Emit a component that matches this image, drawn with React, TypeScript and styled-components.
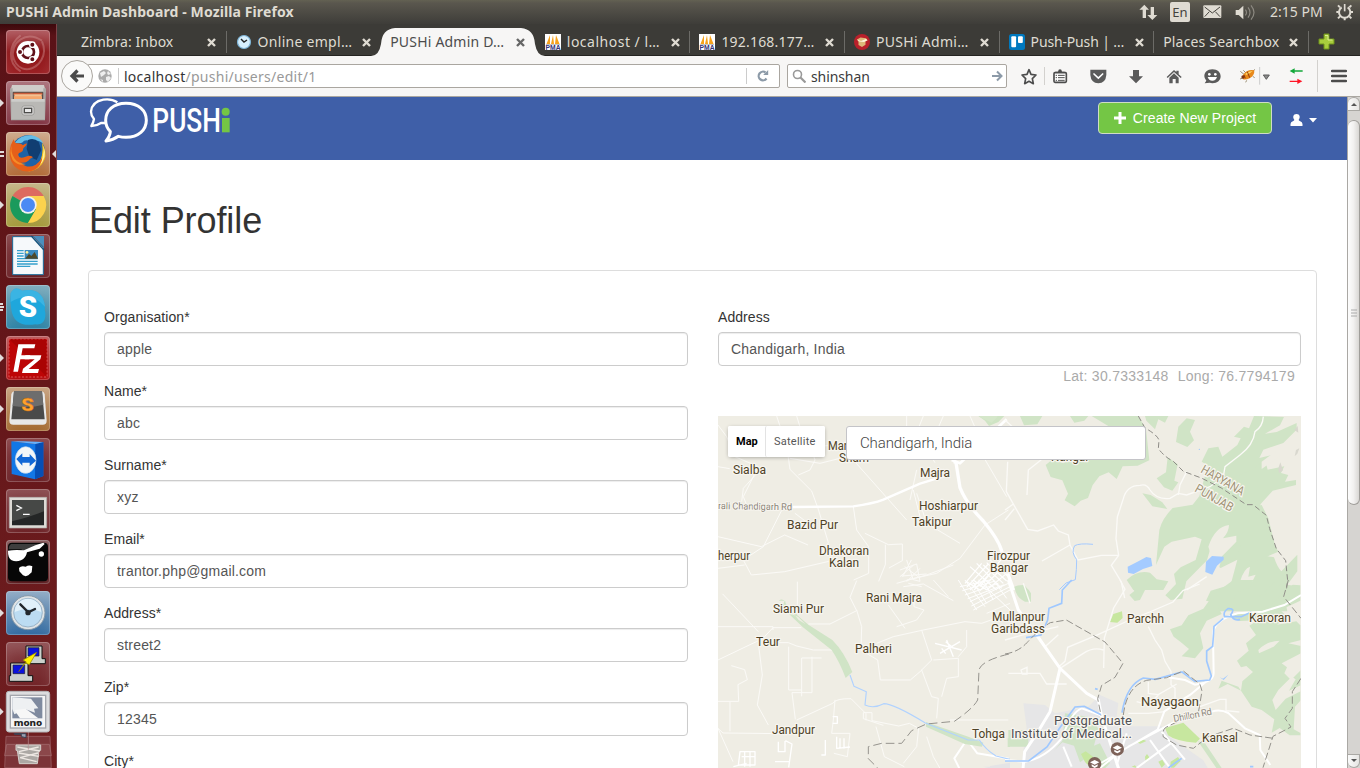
import React from 'react';
import styled, { createGlobalStyle } from 'styled-components';

const Global = createGlobalStyle`
  * { box-sizing: border-box; }
  html, body { margin: 0; height: 768px; overflow: hidden; background: #fff; }
  body { font-family: "Liberation Sans", Arial, sans-serif; font-size: 14px; }
  svg { display: block; flex: none; }
`;

const chrome = '"Noto Sans", "Open Sans", sans-serif';

/* ---------- shared drawing helper: a viewBox in thirds of a pixel ---------- */
const Drawing = ({ x, y, w, h, children }: { x: number; y: number; w: number; h: number; children: React.ReactNode }) => (
  <svg width={w / 3} height={h / 3} viewBox={`${x} ${y} ${w} ${h}`}>{children}</svg>
);

/* ---------- desktop frame ---------- */
const Desktop = styled.div`
  width: 1360px; height: 768px; display: flex; flex-direction: column; overflow: hidden;
`;
const TopPanel = styled.header`
  height: 24px; flex: none; display: flex; align-items: center; justify-content: space-between;
  background: linear-gradient(#636152, #5a574e 12%, #3e3d39); padding: 0 6px; color: #dfdbd2;
  font-family: ${chrome};
`;
const WindowTitle = styled.div`font-size: 14px; font-weight: 700; letter-spacing: 0.11px; line-height: 24px; white-space: nowrap;`;
const Indicators = styled.div`display: flex; align-items: center; height: 24px;`;
const Clock = styled.span`font-size: 14px; letter-spacing: 0; margin: 0 12px 0 15px; width: 54px; line-height: 22px; white-space: nowrap;`;
const Keyboard = styled.span`
  width: 20px; height: 20px; border-radius: 2px; background: #dfdbd2; color: #45433d; font-size: 13px;
  line-height: 21px; text-align: center; margin: 0 13px 0 12px;
`;
const Spacer = styled.span`width: 13px;`;
const Work = styled.div`flex: 1; display: flex; min-height: 0;`;

/* ---------- launcher ---------- */
const Launcher = styled.nav`
  width: 57px; flex: none; display: flex; flex-direction: column; padding-top: 6px; overflow: hidden;
  background: linear-gradient(#3c090c, #5a1217 12px, #631619 40%, #701e20);
  border-right: 1px solid #7b4348;
`;
const LaunchRow = styled.div<{ $up?: boolean }>`
  display: flex; align-items: center; flex: none; height: 44px;
  margin-bottom: ${p => (p.$up ? 4 : 7)}px;
`;
const Mark = styled.div`width: 6px; flex: none; display: flex;`;
const Tile = styled.div<{ $bg: string }>`
  width: 44px; height: 44px; border-radius: 4px; background: ${p => p.$bg}; overflow: hidden;
  box-shadow: inset 0 0 0 1px rgba(255,255,255,.22), inset 0 9px 14px rgba(255,255,255,.13);
`;
const Running = ({ n }: { n?: number }) => (
  <Mark>
    {n === 1 && <svg width="4" height="8"><path d="M0 0 4 4 0 8z" fill="#e2dcdc" /></svg>}
    {n === 2 && <svg width="4" height="8"><path d="M0 1h4v2H0zM0 5h4v2H0z" fill="#e2dcdc" /></svg>}
    {n === 3 && <svg width="4" height="10"><path d="M0 1h3v2H0zM0 4h4v2H0zM0 7h3v2H0z" fill="#e2dcdc" /></svg>}
  </Mark>
);

const apps: { y: number; bg: string; n?: number; focus?: boolean; up?: boolean; art: React.ReactNode }[] = [
  {
    y: 18, bg: 'linear-gradient(#a84a50, #8d1417 50%, #9c2024)', art: <>
      <path d="M40 108C30 50 80 20 126 50M62 142C20 118 26 60 62 34M112 122C82 148 46 136 38 92M126 52c18 40-8 80-42 84" fill="none" stroke="#d69a9c" strokeWidth="6" opacity=".4" />
      <circle cx="84" cy="85" r="34" fill="#fff" />
      <circle cx="84" cy="84" r="18" fill="none" stroke="#601018" strokeWidth="8" />
      <g stroke="#fff" strokeWidth="4"><circle cx="60" cy="84" r="8" fill="#601018" /><circle cx="97" cy="62" r="8" fill="#601018" /><circle cx="97" cy="106" r="8" fill="#601018" /></g>
    </>,
  },
  {
    y: 171, bg: 'linear-gradient(#a3656f, #813442)', n: 1, art: <>
      <path d="M36 183h96l6 22H30z" fill="#cfcdca" /><path d="M38 203h92v26H38z" fill="#56504b" />
      <path d="M41 206h86v7H41z" fill="#c95d3b" /><path d="M43 211h82v14H43z" fill="#f3c192" /><path d="M42 217h84v10H42z" fill="#f4a76d" />
      <path d="M30 193h8v32h92v-32h8l-3 96H33z" fill="#a9a8a5" /><path d="M34 225h100v61H34z" fill="#b9b8b5" /><path d="M34 225h100v8H34z" fill="#cdccca" />
      <rect x="66" y="246" width="36" height="27" rx="6" fill="#dedddb" stroke="#8a8987" strokeWidth="2" /><rect x="73" y="253" width="22" height="13" fill="#e8e8e8" stroke="#4d4d4b" strokeWidth="4" />
    </>,
  },
  {
    y: 324, bg: 'linear-gradient(#c9a180, #b26b38)', n: 2, focus: true, art: <>
      <circle cx="84" cy="386" r="52" fill="#1f62a5" />
      <path d="M44 356q20-24 50-22 26 4 36 24-22-14-40-6-14-8-24 4-10 2-22 0z" fill="#64bde6" />
      <path d="M84 348q18-8 32 6l8 24-14 30-22-10-8-24z" fill="#113e72" />
      <path d="M126 356q16 28 8 50-14 34-50 37 38-18 42-50 3-20 0-37z" fill="#f8c21c" /><path d="M131 366q12 36-14 60 16-30 14-60z" fill="#fff19a" />
      <path d="M41 346q2 10 8 12 14-2 20 6 6-6 12-5-4 9-11 14 0 9-7 12-9 2-8 9 2 12 22 4 16-6 22 2-10 4-14 10-8 8-22 6 20 20 44 6 14-8 20-22-2 26-24 38-24 10-48-2-30-20-26-56 2-18 12-34z" fill="#e65f19" />
      <path d="M36 364q-6 20 8 40 10 14 34 16-24 8-40-12-12-22-2-44z" fill="#f58c28" />
    </>,
  },
  {
    y: 477, bg: 'linear-gradient(#bfae7c, #a59a3b)', n: 1, art: <>
      <path d="M84 543 37.500 516A54 54 0 0 1 131 516z" fill="#dd6a60" /><path d="M84 543 37.500 516A54 54 0 0 0 84 597l24-41z" fill="#1a9a5c" />
      <path d="M84 516h47A54 54 0 0 1 84 597l24-41z" fill="#fcd24d" />
      <circle cx="84" cy="543" r="26" fill="#f1f1f1" /><circle cx="84" cy="543" r="21" fill="#4a8af4" />
    </>,
  },
  {
    y: 630, bg: 'linear-gradient(#7b3439, #6b2126)', art: <>
      <path d="M38 638h62l30 32v82H38z" fill="#f6f9fb" stroke="#186c9c" strokeWidth="3" /><path d="M100 636h32v34z" fill="#4b8fbd" /><path d="m94 636 38 42" stroke="#14517a" strokeWidth="4" />
      <path d="M51 680h20M51 688h20M51 696h20M51 704h62M51 712h62M51 720h62M51 727h40" stroke="#35a0cc" strokeWidth="4" />
      <path d="M74 678h40v27H74z" fill="#3b8bc0" /><path d="m75 704 12-14 7 6 10-12 10 20z" fill="#4c4a2c" /><circle cx="81" cy="685" r="4" fill="#fff29a" />
    </>,
  },
  {
    y: 15, bg: 'linear-gradient(#72a4b6, #2d83a5)', n: 3, art: <>
      <path d="M32 40q12-24 34-8 62-12 69 48-2 8 1 18 2 38-30 35-64 10-72-44-6-24-2-49z" fill="#1fa7dc" /><path d="M32 40q12-24 34-8 62-12 69 48Q92 30 32 66z" fill="#4cbde8" opacity=".6" />
      <text x="84" y="111" textAnchor="middle" fontFamily="Roboto, sans-serif" fontWeight="900" fontSize="88" fill="#fff">S</text>
    </>,
  },
  {
    y: 168, bg: 'linear-gradient(#b44a4c, #b20a0d)', n: 1, art: <>
      <rect x="27" y="177" width="114" height="114" fill="#bd0506" stroke="#dd5555" strokeWidth="3" strokeDasharray="6 5" /><path d="M28 178h112v112z" fill="#8f0000" opacity=".4" />
      <path d="M55 193h51l-3 12H68l-4 21h27l-3 12H61l-7 37H40z" fill="#fff" /><path d="M76 226h48l-3 12-35 29h31l-3 12H66l3-13 35-28H74z" fill="#fff" />
    </>,
  },
  {
    y: 321, bg: 'linear-gradient(#c29a75, #a46a30)', n: 1, art: <>
      <path d="M34 342q2-8 10-8h80q8 0 10 8l6 80q0 12-12 12H40q-12 0-12-12z" fill="#e8e8e8" /><path d="M42 334h84l8 84H34z" fill="#4a4a4a" /><path d="M42 334h84l4 40q-40 12-92 4z" fill="#6d6d6d" />
      <text x="83" y="393" textAnchor="middle" fontFamily="Roboto, sans-serif" fontWeight="900" fontSize="54" fill="#ffa12c" stroke="#bd6414" strokeWidth="1" transform="translate(-10 0) scale(1.12 1)">S</text>
    </>,
  },
  {
    y: 474, bg: 'linear-gradient(#7f3439, #6b2126)', art: <>
      <path d="m34 484 72 8 24-6v102l-25 10-70-16z" fill="#1277e6" /><path d="m106 492 24-6v102l-25 10z" fill="#064fb5" /><path d="m34 484 72 8 24-6-60-2z" fill="#64b3ff" />
      <ellipse cx="77" cy="540" rx="31" ry="40" fill="#f3f6f8" stroke="#c2d7ea" strokeWidth="2" /><path d="m49 537 18-17v11h22v-9l19 20-19 17v-11H67v9z" fill="#1268d6" />
    </>,
  },
  {
    y: 627, bg: 'linear-gradient(#7f3a3e, #6e2327)', art: <>
      <path d="M28 652h112v92H28z" fill="#dddbd6" stroke="#b0aeaa" strokeWidth="2" /><path d="M36 660h96v76H36z" fill="#242626" /><path d="M36 660h96v34q-50 20-96 30z" fill="#464846" />
      <path d="m49 676 15 8-15 8M69 703h20" fill="none" stroke="#fff" strokeWidth="4" />
    </>,
  },
  {
    y: 30, bg: 'linear-gradient(#7b4a4c, #5b1b1e)', art: <>
      <rect x="24" y="38" width="120" height="116" rx="12" fill="#070707" /><path d="M34 42h94L72 66l-8-8H26q0-12 8-16z" fill="#3e3e3e" />
      <path d="M24 62q20-4 48-1l34-15 24-8 4 4-15 14-38 11q-3 17-18 24-15 6-28 0-12-8-11-29z" fill="#fff" /><circle cx="124" cy="72" r="8" fill="#fff" /><path d="M57 114q6-8 20-4 10-6 20-1l-2 18-10 9q-8 5-16 0l-11-12z" fill="#fff" />
    </>,
  },
  {
    y: 183, bg: 'linear-gradient(#86a3bf, #336ba1)', n: 1, art: <>
      <circle cx="84" cy="248" r="51" fill="#dfe3e5" stroke="#8598a7" strokeWidth="3" /><circle cx="84" cy="248" r="43" fill="#bcdcf2" stroke="#9ab4c8" strokeWidth="3" /><path d="M44 246a40 40 0 0 1 80 0q-40-18-80 0z" fill="#e1f1fa" />
      <path d="m61 223 24 24 20-10" fill="none" stroke="#22272c" strokeWidth="7" strokeLinecap="round" /><circle cx="84" cy="248" r="8" fill="#22272c" />
    </>,
  },
  {
    y: 336, bg: 'linear-gradient(#864044, #722428)', up: true, art: <>
      <path d="M78 348h48v38h10v15H87V386h-9z" fill="#ccd2cd" stroke="#111" strokeWidth="3" /><path d="M84 353h33v25H84z" fill="#0b13dc" stroke="#222" strokeWidth="2" />
      <path d="M32 399h52v38h14v17H28v-17h4z" fill="#ccd2cd" stroke="#111" strokeWidth="3" /><path d="M39 405h35v26H39z" fill="#0b13dc" stroke="#222" strokeWidth="2" /><path d="M56 425 75 398l13 6 22-37-41 23 10 6z" fill="#fff000" stroke="#8c8000" strokeWidth="2" />
    </>,
  },
];

const MonoStack = () => (
  <Drawing x={0} y={481} w={168} h={234}>
    <path d="M18 620h132l4 94H14z" fill="#7c3438" stroke="#a1686b" strokeWidth="2" /><path d="m20 644 128 0 6 34H14z" fill="#8b474a" stroke="#a87375" strokeWidth="2" />
    <path d="M42 612h36v12l-14-3v-7H44z" fill="#9aa0b2" stroke="#394052" strokeWidth="3" /><path d="M48 646h74v16h-5l-5 40H58l-6-40h-4z" fill="#aca8a4" stroke="#d5d1cd" strokeWidth="3" />
    <path d="m52 652 68 12M56 670l60 10M60 684l50 12M116 652l-60 14M114 670l-54 14" stroke="#eee8e3" strokeWidth="4" /><path d="M85 604v56" stroke="#b88d8f" strokeWidth="2" />
    <rect x="19" y="485" width="130" height="122" rx="8" fill="#dcdcde" stroke="#b5b5b8" strokeWidth="3" /><rect x="31" y="497" width="106" height="98" fill="#f5f5f6" stroke="#a4a6ac" strokeWidth="4" />
    <path d="M37 503h90v63H37z" fill="#7f8a9f" /><path d="m37 503 56 4 22 29-13 1 3 12-28-10-34 15-6-16z" fill="#eef0f2" /><path d="m43 541 34-4 38 29H60z" fill="#f7f7f7" />
    <text x="84" y="590" textAnchor="middle" fontFamily='"Noto Sans", sans-serif' fontWeight="800" fontSize="28" textLength="86" lengthAdjust="spacingAndGlyphs" fill="#222">mono</text>
    <path d="m0 535 11 11-11 11z" fill="#e2dcdc" />
  </Drawing>
);

/* ---------- browser chrome ---------- */
const Browser = styled.main`flex: 1; min-width: 0; display: flex; flex-direction: column;`;
const TabStrip = styled.div`
  height: 32px; flex: none; display: flex; background: #3c3b37; padding-left: 15px; border-bottom: 1px solid #252421;
  font-family: ${chrome};
`;
const Tab = styled.div<{ $active?: boolean; $line?: boolean }>`
  width: 154.600px; height: 32px; flex: none; display: flex; align-items: center; gap: 6px; padding: 4px 10.500px 0 9px; position: relative;
  color: ${p => (p.$active ? '#4c4c4c' : '#dfdbd2')};
  &::after {
    content: ""; position: absolute; right: 0; top: 7px; width: 1px; height: 22px;
    background: ${p => (p.$line ? '#6c6b67' : 'transparent')};
  }
`;
const TabShape = styled.svg`position: absolute; left: -10px; top: 4px;`;
const TabLabel = styled.span<{ $ls: number }>`
  flex: 1; position: relative; font-size: 14px; line-height: 20px; letter-spacing: ${p => p.$ls}px; white-space: nowrap;
`;
const TabClose = styled.span`position: relative; width: 9px; display: flex; flex: none;`;
const NewTab = styled.div`width: 36px; display: flex; align-items: center; justify-content: center; padding-top: 4px;`;
const NavBar = styled.div`
  height: 41px; flex: none; display: flex; align-items: center; background: #f7f6f5; border-bottom: 1px solid #aaa7a1;
  padding-left: 4px; font-family: ${chrome};
`;
const Back = styled.div`
  width: 32px; height: 32px; flex: none; border-radius: 50%; border: 1px solid #aaa6a0; background: #fafaf9; z-index: 1;
  display: flex; align-items: center; justify-content: center;
`;
const UrlBar = styled.div`
  width: 692px; height: 24px; margin-left: -5px; flex: none; display: flex; align-items: center; background: #fff;
  border: 1px solid #aaa6a0; border-radius: 0 2px 2px 0; padding-left: 9px;
`;
const UrlText = styled.span`
  flex: 1; border-left: 1px solid #ccc; margin-left: 6px; padding-left: 5px; height: 16px; line-height: 17px; font-size: 14px;
  letter-spacing: 0.26px; color: #999; b { color: #333; font-weight: 400; }
`;
const Reload = styled.div`border-left: 1px solid #ccc; height: 16px; width: 33px; display: flex; align-items: center; justify-content: center;`;
const SearchBox = styled.div`
  width: 220px; height: 24px; margin: 0 7px; flex: none; display: flex; align-items: center; background: #fff;
  border: 1px solid #aaa6a0; border-radius: 2px; padding: 0 3px 0 4px; font-size: 14px; color: #3b3b3b; span { flex: 1; margin-left: 5px; letter-spacing: -.1px; line-height: 20px; padding-top: 1px; }
`;
const Cell = styled.div<{ $w: number }>`width: ${p => p.$w}px; flex: none; display: flex; justify-content: center;`;
const Rule = styled.div<{ $h: number }>`width: 1px; height: ${p => p.$h}px; background: #d3d1ce; flex: none;`;

const Favicon = ({ kind }: { kind: string }) => {
  if (kind === 'clock') return <svg width="16" height="16"><circle cx="8" cy="8" r="6.500" fill="#d7effc" stroke="#7eb5d8" strokeWidth="1.200" /><path d="m5 5 3 3 3-2" fill="none" stroke="#222" strokeWidth="1.400" /></svg>;
  if (kind === 'pma') return (
    <svg width="16" height="16"><path d="M0 0h16v16H0z" fill="#fff" /><path d="M5 1 5 10H1.500zM8 1l1 9H6zM11 1l3.500 9H10z" fill="#f7a21b" /><path d="M1 10.500h14" stroke="#aaa" strokeWidth=".7" />
      <text x=".6" y="15.600" fontSize="6.500" fontWeight="700" fontFamily="Liberation Sans, sans-serif" textLength="15" lengthAdjust="spacingAndGlyphs" fill="#333377">PMA</text></svg>
  );
  if (kind === 'red') return <svg width="16" height="16"><circle cx="8" cy="8" r="8" fill="#b9202b" /><path d="m3 5.500 3.500-2 5.500.700 1.500 2-2 1v3.500L8 13 4.500 11V7.500z" fill="#ddb878" /><path d="m3 5.500 4 1.500 5-2 1.500 1.200L10 8l-5-.5z" fill="#fff4da" /></svg>;
  return <svg width="16" height="16"><rect width="16" height="16" rx="2.500" fill="#0079bf" /><rect x="2.300" y="2.300" width="4.800" height="11" rx="1" fill="#fff" /><rect x="9" y="2.300" width="4.800" height="6.800" rx="1" fill="#fff" /></svg>;
};
const tabs = [
  { t: 'Zimbra: Inbox', ls: 0.05 },
  { t: 'Online empl…', icon: 'clock', ls: 0.28 },
  { t: 'PUSHi Admin D…', active: true, ls: 0.2 },
  { t: 'localhost / l…', icon: 'pma', ls: 0.5 },
  { t: '192.168.177…', icon: 'pma', ls: 0.2 },
  { t: 'PUSHi Admi…', icon: 'red', ls: 0.3 },
  { t: 'Push-Push | …', icon: 'trello', ls: -0.15 },
  { t: 'Places Searchbox', ls: 0.18 },
];

/* ---------- page ---------- */
const Viewport = styled.div`flex: 1; min-height: 0; display: flex;`;
const Page = styled.div`flex: 1; min-width: 0; overflow: hidden; background: #fff;`;
const Banner = styled.div`
  height: 63px; background: #3f5fa8; display: flex; justify-content: space-between; align-items: flex-start; padding: 0 29px 0 31px;
`;
const Actions = styled.div`display: flex; align-items: center; height: 42px;`;
const CreateButton = styled.button`
  width: 174px; height: 32px; border: 1px solid #cfdcc5; border-radius: 4px; background: #74c645; color: #fff; margin-right: 18px;
  font: 14px/20px "Liberation Sans", sans-serif; letter-spacing: .12px; display: flex; align-items: center; justify-content: center; gap: 7px; padding: 0; white-space: nowrap;
`;
const UserMenu = styled.div`padding-top: 4px;`;
const Body = styled.section`padding: 39px 30px 0 31px;`;
const Heading = styled.h1`
  margin: 0 0 28px; padding: 1px 0 0 1px; font-size: 36px; line-height: 42px; font-weight: 400; color: #333; letter-spacing: -0.08px;
`;
const Panel = styled.div`
  border: 1px solid #ddd; border-radius: 4px; padding: 36px 15px 0; display: grid; grid-template-columns: 584px 583px; column-gap: 30px; height: 600px;
`;
const Field = styled.label`display: block; margin-bottom: 15px; color: #333; line-height: 20px; letter-spacing: .07px;`;
const Input = styled.input`
  display: block; width: 100%; height: 34px; margin-top: 5px; border: 1px solid #ccc; border-radius: 4px; padding: 6px 12px;
  box-shadow: inset 0 1px 1px rgba(0,0,0,.075); color: #555; font: 14px/20px "Liberation Sans", sans-serif; letter-spacing: .2px; background: #fff;
`;
const Coordinates = styled.div`
  margin: -15px 6px 30px 0; text-align: right; line-height: 20px; letter-spacing: .28px; color: #aaa; span + span { margin-left: 9px; }
`;
const MapFrame = styled.div`position: relative; height: 360px; overflow: hidden; background: #efede4;`;
const MapControls = styled.div`position: absolute; left: 10px; top: 10px; display: flex; box-shadow: 0 1px 4px -1px rgba(0,0,0,.4); border-radius: 2px; background: #fff;`;
const MapType = styled.button<{ $on?: boolean }>`
  height: 31px; border: 0; border-left: ${p => (p.$on ? '0' : '1px solid #e3e3e3')}; background: #fff; padding: 0 7px 0 8px; border-radius: 2px; text-align: left;
  font: ${p => (p.$on ? 700 : 400)} 11px Roboto, sans-serif; letter-spacing: ${p => (p.$on ? 0 : 0.25)}px; color: ${p => (p.$on ? '#000' : '#565656')}; width: ${p => (p.$on ? 37 : 60)}px; white-space: nowrap;
`;
const MapSearch = styled.input`
  position: absolute; left: 128px; top: 10px; width: 300px; height: 34px; border: 1px solid #c4c4c8; border-radius: 3px;
  padding: 0 13px; font: 300 15px Roboto, sans-serif; letter-spacing: -.12px; color: #444; background: #fff;
`;

const Label = ({ x, y, children, s = 12, w }: { x: number; y: number; children: string; s?: number; w?: number }) => (
  <text x={x} y={y} fontSize={s} textLength={w} lengthAdjust="spacingAndGlyphs" fill="#4e4226" stroke="#f7f5ef" strokeWidth="2.500" paintOrder="stroke" strokeLinejoin="round">{children}</text>
);

const Terrain = () => (
  <svg width="583" height="360" viewBox="718 416 583 360" fontFamily="Roboto, sans-serif">
    {/* north-west */}
    <g transform="translate(710 400) scale(.33333)" fill="none" stroke="#fbfaf7" strokeWidth="3" strokeLinejoin="round">
      <path d="M24 75 50 110 75 170 145 200 100 290 112 320M200 48l30 90 10 70 65 65 20 55 30 100-20 30M24 200l35 6M170 205l-25 10-45 50-5 40M260 48l20 65 60 25 95-10M240 175l90 15 60-15M295 120l20 60-15 30-35 15M430 180l160 180M590 48v50l32 40M610 270l20 80 50 40M700 48l-26 60 10 55M780 48l22 50-30 70M820 170l70 120" />
      <path d="M218 325 160 440 100 480M24 410l130 30 70-35 70 30M100 480l24 45 100-10 150-35M24 505l80-10M255 340l40 30M430 320l10 70 36 50v80l-45 20M465 400l70 34 42-2v50l-40 22M526 434v60l-20 50M600 300l20-90M620 280l30 90 100 60M895 330l-70 45-75 100-70 45-90 20M560 550l90-25 80-30M640 48l-20 50 55 90" />
      <path d="m570 510 50-18 10 52-20-5M590 480l20 60M610 496l-40 34M575 528l75-6M604 480l-26 50M584 500l40 30M590 545l40-40" />
      <path d="M248 321 430 319q60-8 90-20l110-48 90-28" stroke="#fff" strokeWidth="7" /><path d="m738 188 12 75q20 50 70 100 45 55 54 87l6 22" stroke="#fff" strokeWidth="10" /><path d="m725 180 25 10 140-132M735 190l-5-15" stroke="#fff" strokeWidth="8" />
      <g strokeWidth="3.500" stroke="#fff"><path d="m780 500 80 70M800 490l75 75M820 495l60 55M840 480l60 55M850 500l-70 70M870 510l-60 62M890 520l-60 50M815 490l-50 60M880 470l-70 90M770 545l40 25M790 540l40 30M830 488l60 55M835 492l-65 70M862 498l-70 72" /></g>
      <path d="M805 48l20 14 12 16 28-12 18-18z" fill="#cfe4c4" stroke="none" /><path d="M808 50q30-14 55 0l-18 18z" fill="#d5e7ca" stroke="none" />
    </g>
    {/* north-east */}
    <g transform="translate(1005 400) scale(.33333)">
      <g fill="#d0e4c6">
        <path d="M45 48h67l-15 25-40 3zM195 48h55l-12 14-30 6zM260 48h140l23 38 10 95-35 16-45 2-18 38-24-20-28 12-20 26-14 39-22 8-18 17-30-18 10-20-17-40-35-10-15-36 18-15 35 10 20-12 30-12 50-10 38-22h90z" />
        <path d="M520 80l25-25 25 5-15 35 12 26-20 20-34-15zM420 48h70l-10 20-20-10-10 30-26-26zM455 235l28-18 5-45 30 20-10 50 12 5-18 25-25-10zM412 280l25 5 35 22 15 20-45-8zM590 185l20-40 30-5 12 30 45-35 10-20-20-5 30-30 15 5 15-37 90 3-12 25-45 25 35-5 60-27v20l-40 40-60 20-12 25 50-12-42 45-16 24-28 6-10 30-18-16z" />
        <path d="M463 390q8-34 40-66l60-10 20-25 22-80 25-30 40 60 70-30 40-30 8 30 50-10-10 20 22 6-10 20 33-5v15l-70 17-36 40-20 60-40 5 50 35-30 45 80 15q10 30 22 42l48-50v50l-30 40 30 5v20l-35 30 5 25H588l60-22-45-10 14-30 60-18 20-75-50 25-16-10 45-70-58 15-12 42-62 63-12 52-35 4-16-14 32-34-6-30 20-20 45-22 18-62-20-8-70 15-22 15-25 55z" />
        <path d="M365 540q30-30 70-22l20 20 35 6-15 26h-90zM40 560q20-14 28 12H38z" />
        <path d="M640 340l130-25 20 40 20 80 10 20-70 30-60-10 20-40-60 5z" />
      </g>
      <g fill="#efede4"><path d="M610 440q20-60 62-65 0 20-18 40l40-8v18l-43 44-10 40-42 5 18-52zM705 545q12-40 30-45l-5 30 22-6-15 30zM600 130l-22 62-8-10 18-50zM770 185l40-30 20 10-60 42z" /></g>
      <path d="M873 150l10-5-6 16-8 8zM820 205l6-18 8 24-12 8zM868 90l10-12 2 20z" fill="#d9d8cf" />
      <g fill="none" stroke="#fbfaf7" strokeWidth="4">
        <path d="M775 50q-2 30-25 45-5 40-45 70l-45 35-5 30-40 30-70 25-25-5-25 15q-40 5-60-25-10-20-30-14-40 0-50 40l-18 55-4 65 8 50-22 30 30 50 10 48M545 215l-20 40-5 30M8 185l-4 90L68 388l30 5 48-18 14 18 30 12 5 30-84 48M195 435l24 45 70-14h50M66 285l4-75 50-40M0 330l25-18M0 360l28-34M545 570l60-40M0 60l22 20M45 90" />
        <path d="m8 520 18 50" stroke="#fff" strokeWidth="10" />
      </g>
      <path d="M400 48 420 84q36 20 42 36l-2 26q20 26 45 38l30 30 54 20 60 30 30 20 45 30h20l40 32 10 40 20 60 28 36 6 60-8 58" fill="none" stroke="#8d8b86" strokeWidth="3" strokeDasharray="17 9" />
      <path d="M264 433q-40-4-55 4-12 20 6 42 0 30-4 60l-28 10-20 20" fill="none" stroke="#a5caff" strokeWidth="3" />
      <path d="m368 500 28-14 28-15 14 3 4 24-28 9-28 15-17-4zM603 485l18-17 35 2v9l-20 18-14 27-21-8z" fill="#a4cbff" /><circle cx="583" cy="148" r="2" fill="#9cc5ff" />
    </g>
    {/* south-west */}
    <g transform="translate(710 580) scale(.33333)" fill="none" stroke="#fbfaf7" strokeWidth="3" strokeLinejoin="round">
      <path d="M38 42 145 155M24 240l115-55 20-10 30-32h85M24 140h165v10M262 5v75M145 190l12 95-15 90 33 60M190 188h45l25 10 50 12h60M236 200v130h38M335 234h-60v115M306 230v108h-60l10 80M24 364h62l-2-50 28-15-8-30-40-12M60 364v90M24 445l15 14 170 2M260 420l108-50q10-15 55-14l45 45v20M24 445l45 100" />
      <path d="M295 132h65l80-40-20-40 20-50M440 90l15 50-2 70 50 30 8 60h90l35-30M500 190l50-20 90-20 125-25 50 5 85-30M560 140l60-20 22-30-30-10v-40M535 75l50 70M635 150l30 90-30 30 30 80 20 5-5 60M670 240l75-5v55l-35 5-15 55M770 150v50l-25 30M830 100l70-30M595 10l40 10M580 20l60-8 90 50M670 0l45 50" />
      <path d="M520 436l-60-20v-18h26v24l80 16 32-8 28 15-6 55-40 50M650 470l20 60 20 35M498 440l25 90 60 30M375 360l-5 60-5 40h55l-8 70-40-10M720 420h175" />
      <g stroke="#fff" strokeWidth="4"><path d="M368 410h14v20h-14M346 480v45h-12M380 470v35l40-4M390 475v30M402 475v32M205 485v30h20v-32M226 482l20 10-10 70M90 515h45v40h-50zM95 530h40M104 515v45M120 515v45M195 545h45M70 560l40-10" /><path d="m675 190 80 20M710 180l20 50M690 220l60-35M707 185l24 20M695 205l12 16" /></g>
      <path d="M770 480 733 535l15 30M772 480l30 40 95 16" stroke="#fff" strokeWidth="6" />
      <g stroke="#fff" strokeWidth="3"><path d="M745 0l55 90M765 0l60 80M785 0l45 70M805 0l95 90M750 20l90-20M765 45l100-35M780 65l115-55M790 90l110-60M820 0l30 60M850 0l40 55M757 32l95-28M773 56l110-42M784 78l116-58" /></g>
      <path d="M206 62q10-8 20 2 0 10 12 20 14 4 24 22l33 28 72 46q36 36 60 96l-20 18q-18-48-42-84l-86-68-42-40-20-22 7-18z" fill="#d0e4c6" stroke="none" /><path d="m234 98 30 12 22 22-20-12-14-18z" fill="#efede4" stroke="none" />
      <path d="m648 426 127 44 45 18-4 12-52-8-116-52zM893 475h7v26h-7z" fill="#d0e4c6" stroke="none" />
      <path d="M420 285l12 34 37 16-4 40q26 12 56-4 30 0 125 58l128 51h34q20 30 50 48l42 10" stroke="#b0d2ff" strokeWidth="3.500" />
      <path d="M897 222q-84 20-90 48l-4 90q-14 26-70 64l-84 8-44 20-30 38h-60l-40 10v36l30 30" stroke="#95938d" strokeWidth="3" strokeDasharray="26 12" />
      <path d="m840 558 60-10v20h-60zM820 560h30v8z" fill="#e4e4e6" stroke="none" />
    </g>
    {/* south-east */}
    <g transform="translate(1005 580) scale(.33333)">
      <path d="M55 370l65 5 30 25 100-20 35-35 55 24-5 40 35 30h100l25 32 100 70 25 43H45l20-140z" fill="#e6e6e7" />
      <g fill="#d0e4c6">
        <path d="M10 450h60v50H10zM28 20q30-14 50 20v25H60q-26-10-32-45zM375 10q14-15 45-10l5 20-20 40-16 3-16-18 15-12zM180 400l80 12 20 36-20 75-35 24-18-50-35-10-25 25 25-30zM235 510l50-20 30 60-15 15h-45zM600 490l50 74h-16l-55-80zM495 148l35-12 20-30 45-20 30-42 60-44h60l-8 22-44 16-10 36-45 4 12 24-45 20-20 38 10 45-25 30-40-6 22-22-26-22-20-15zM762 50l50-46h20l-20 28zM640 326l28-14 40 20 4-28 32-28-20-18-16 4-12-20 35-30-8-22 30-25-20-28 26-16-55 2-36-16 60-10 65-18 70-65 23 2v46l-60 28 20 20-30 24 58-10 12 12v330h-32l-30-22-24 14 8-40-38-28-30-10-40-60-50-18z" />
      </g>
      <g fill="#efede4"><path d="M760 210q24-26 64-28l-18 18-44 20zM830 250l58-30v50l-30 30-20-20 8-18zM820 330l40-40 12 8-20 34 35-16v18l-45 22-30 34-10-30zM850 190l38-10v18zM870 380l18-20v100l-22-12z" /></g>
      <g fill="#c7e79f"><path d="m480 444 55-16 50 48-12 12q-60-4-84-22zM315 126l10-24 26-8 2 20-16 14zM228 522l14-8 22 16-4 36-20-20zM398 488l14-10 12 5-18 8zM420 530l6-8 10 14-14 12zM497 545l22-14 8 12-20 20h-12zM460 545l12-6 8 14-10 10zM380 560l10-4 6 8z" /></g>
      <g fill="none" stroke="#fbfaf7" strokeWidth="4">
        <path d="M345 0 360 28l-34 56-28 90-2 90M10 280h95l20 32h60M0 180l70-20 90-20M160 262l20-18 8-42 86-36 100-46 60-24 70-30 30-34 50-20M430 140l20 40 20 30 10 34 18 30v40l12 10v40M165 265l70-45q30-20 60-10M48 270l18-8v20H52zM430 305v35l30 4 55-32M460 345l-30 30-35-10M370 400h60l50-5M585 380l60-22h18v34l40 4M55 10l20 60M120 200l40-36" />
      </g>
      <g fill="none" stroke="#fff" strokeWidth="6"><path d="m888 45-50 30-65 20-75 5q-70 20-74 60l2 120q0 18-24 26l-46 38-78 50-20 55-170 100M620 395q26-8 50 4l50 46 44 20 2 45 30 45M480 290l60 10 30 14 30-6M365 460l-30 95M435 480l60 84M470 455l70 84M370 500l150-80M395 564l60-44 45-32M175 500l25 60M285 564l52-42M560 455" />
        <path d="m10 0 30 90 55 75 70 100 80 75 35 20 10 50 60 184M165 265l-30 130-36 60-40 60-5 50" strokeWidth="9" /><path d="m0 540 60 5q60-10 110-70 30-80 60-90l60 22" strokeWidth="6" /></g>
      <path d="m200 0-28 30-2 40-38 15-4 35-20 45-45 8M705 118q-20 6-28-14 16-20-8-18-16 10-10 24h50l30-14M655 115l-28 24-4 60-18 14v30l14 45-5 12-45 4-38-28-80 22-36-4q-50 20-64 104M288 404l-50-25-28 2-44 60-40 60-55 42H0M270 326l8 2M530 535l-20 14-20 15M735 560h10" fill="none" stroke="#9fc8ff" strokeWidth="5" /><path d="m644 292 10 4 16-12-14 16z" fill="#9fc8ff" />
      <g fill="none" stroke="#93918b" strokeWidth="3" strokeDasharray="22 9"><path d="M0 222q40-6 66-34 40-44 70-60l48-8 116 66 54 64-24 42-40 24-12 40 10 50M355 405q10-86 70-104l60-8 50-20 50 40 6 20-10 60-100 50q-10 10-6 28l40 24 50 10 45-35 75-25 50 20 70 10M850 0l-14 50 52 65M888 295l-26 40v50l-22 30 18 26-54 28-30 94" /></g>
      <g stroke="none"><circle cx="337" cy="507" r="20" fill="#7d6259" /><circle cx="269" cy="551" r="20" fill="#7d6259" /><path d="m323 503 14-7 14 7-14 7zm5 6 9 5 9-5v6l-9 5-9-5zM255 547l14-7 14 7-14 7zm5 6 9 5 9-5v6l-9 5-9-5z" fill="#fff" /></g>
    </g>
    <Label x={828} y={450} w={28}>Mana</Label><Label x={839} y={462} w={30}>Sham</Label>
    <Label x={733} y={474} w={33}>Sialba</Label><Label x={920} y={477} w={30}>Majra</Label><Label x={919} y={510} w={59}>Hoshiarpur</Label><Label x={912} y={526} w={40}>Takipur</Label>
    <Label x={787} y={529} w={51}>Bazid Pur</Label><Label x={819} y={555} w={50}>Dhakoran</Label><Label x={829} y={567} w={30}>Kalan</Label><Label x={718} y={560} w={32}>herpur</Label>
    <Label x={987} y={560} w={43}>Firozpur</Label><Label x={990} y={572} w={38}>Bangar</Label><Label x={1051} y={461} w={37}>Nangal</Label>
    <Label x={866} y={602} w={56}>Rani Majra</Label><Label x={773} y={613} w={51}>Siami Pur</Label><Label x={756} y={646} w={24}>Teur</Label><Label x={855} y={653} w={37}>Palheri</Label>
    <Label x={992} y={621} w={53}>Mullanpur</Label><Label x={991} y={633} w={54}>Garibdass</Label><Label x={1127} y={623} w={37}>Parchh</Label><Label x={1249} y={622} w={42}>Karoran</Label>
    <Label x={772} y={734} w={43}>Jandpur</Label><Label x={972} y={738} w={33}>Tohga</Label><Label x={1202} y={742} w={36}>Kansal</Label><Label x={1141} y={706} s={13.500} w={58}>Nayagaon</Label>
    <g fill="#515155" stroke="#f7f5ef" strokeWidth="2.500" paintOrder="stroke" fontSize="13"><text x="1054" y="725" textLength="78">Postgraduate</text><text x="1011" y="738" textLength="121">Institute of Medical...</text></g>
    <g fill="#8d877c" stroke="#f7f5ef" strokeWidth="2" paintOrder="stroke" fontSize="9.500"><text x="718" y="509" textLength="74" transform="rotate(1 718 509)">rali Chandigarh Rd</text><text x="1174" y="722" textLength="39" transform="rotate(-11 1174 722)">Dhillon Rd</text></g>
    <g fill="#a09376" stroke="#f7f5ef" strokeWidth="2.500" paintOrder="stroke" fontSize="12.500"><text x="1200" y="472" textLength="48" lengthAdjust="spacingAndGlyphs" transform="rotate(30 1200 472)">HARYANA</text><text x="1194" y="491" textLength="42" lengthAdjust="spacingAndGlyphs" transform="rotate(30 1194 491)">PUNJAB</text></g>
  </svg>
);

/* ---------- scrollbar ---------- */
const Scrollbar = styled.div`
  width: 13px; flex: none; display: flex; flex-direction: column; background: #d6d4d1; border-left: 1px solid #aaa8a4;
`;
const ScrollEnd = styled.div<{ $h: number; $bottom?: boolean }>`
  height: ${p => p.$h}px; flex: none; display: flex; align-items: center; justify-content: center; background: linear-gradient(90deg, #fafafa, #e6e5e3);
  border: 1px solid #aaa8a4; border-left: 0; border-radius: ${p => (p.$bottom ? '0 0 6px 6px' : '6px 6px 0 0')};
`;
const Gap = styled.div<{ $h?: number }>`${p => (p.$h ? `height: ${p.$h}px; flex: none;` : 'flex: 1;')} background: #d6d4d1;`;
const Thumb = styled.div`
  height: 385px; flex: none; border: 1px solid #a09e9a; border-left: 0; border-radius: 6px; display: flex; align-items: center; justify-content: center;
  background: linear-gradient(90deg, #fdfdfd, #f2f1f0 50%, #d9d7d4);
`;

const fields = [['Organisation*', 'apple'], ['Name*', 'abc'], ['Surname*', 'xyz'], ['Email*', 'trantor.php@gmail.com'], ['Address*', 'street2'], ['Zip*', '12345'], ['City*', '']];

export default function App() {
  return (
    <Desktop>
      <Global />
      <TopPanel>
        <WindowTitle>PUSHi Admin Dashboard - Mozilla Firefox</WindowTitle>
        <Indicators>
          <Drawing x={236} y={6} w={57} h={60}><path d="m252 14 14 15h-9v25h-10V29h-10zM276 60l-15-15h10V21h10v24h10z" fill="#dfdbd2" /></Drawing>
          <Keyboard>En</Keyboard>
          <Drawing x={428} y={10} w={57} h={52}><rect x="429" y="17" width="54" height="38" rx="3" fill="#dfdbd2" /><path d="m433 22 23 18 23-18M433 51l14-15M479 51l-14-15" fill="none" stroke="#45433d" strokeWidth="3" /></Drawing>
          <Spacer />
          <Drawing x={523} y={8} w={60} h={56}><path d="M525 29h9l14-13v41l-14-13h-9z" fill="#dfdbd2" /><path d="M554 28q7 8 0 17M562 21q12 15 0 31M571 15q18 22 0 43" fill="none" stroke="#8d8a82" strokeWidth="3.500" /></Drawing>
          <Clock>2:15 PM</Clock>
          <Drawing x={826} y={10} w={54} h={54}><g fill="none" stroke="#dfdbd2"><path d="M843 23a17 17 0 1 0 18 0" strokeWidth="6" /><path d="M852 13v22" strokeWidth="5" /><path d="M852 54v8M834 37h-7M870 37h7M838 50l-6 6M866 50l6 6M838 23l-6-6M866 23l6-6" strokeWidth="6" /></g></Drawing>
        </Indicators>
      </TopPanel>
      <Work>
        <Launcher>
          {apps.map(a => (
            <LaunchRow key={a.y + a.bg} $up={a.up}>
              <Running n={a.n} />
              <Tile $bg={a.bg}><Drawing x={18} y={a.y} w={132} h={132}>{a.art}</Drawing></Tile>
              {a.focus && <svg width="6" height="8"><path d="M6 0 2 4l4 4z" fill="#e2dcdc" /></svg>}
            </LaunchRow>
          ))}
          <MonoStack />
        </Launcher>
        <Browser>
          <TabStrip>
            {tabs.map((t, i) => (
              <Tab key={i} $active={t.active} $line={i !== 1 && i !== 2}>
                {t.active && <TabShape width="176" height="28"><path d="M0 28q8 0 10-12 1-15 14-16h126q13 1 14 16 2 12 10 12z" fill="#f7f6f5" /></TabShape>}
                {t.icon && <Favicon kind={t.icon} />}
                <TabLabel $ls={t.ls}>{t.t}</TabLabel>
                <TabClose><svg width="9" height="9"><path d="m1 1 7 7M8 1 1 8" stroke={t.active ? '#666' : '#dfdbd2'} strokeWidth="2.400" /></svg></TabClose>
              </Tab>
            ))}
            <NewTab><svg width="17" height="17"><path d="M6 1h5v5h5v5h-5v5H6v-5H1V6h5z" fill="#a9cd3d" stroke="#6f921d" /><path d="M7 2.500h3V7h4.500" fill="none" stroke="#dbee91" /></svg></NewTab>
          </TabStrip>
          <NavBar>
            <Back><svg width="16" height="16"><path d="M8.500 2.500 3 8l5.500 5.500M3.500 8H15" fill="none" stroke="#4a4a4a" strokeWidth="3.200" /></svg></Back>
            <UrlBar>
              <svg width="14" height="14"><circle cx="7" cy="7" r="6.700" fill="#aaa" /><path d="M2 4l4-2 2 2-2 2-3 2zM8 8l3-1 2 2-3 4-2-2zM10 2l3 3-3 1-1-2zM2 10l3 1v2z" fill="#eee" /></svg>
              <UrlText><b>localhost</b>/pushi/users/edit/1</UrlText>
              <Reload><svg width="12" height="12"><path d="M9.500 8.500A4.300 4.300 0 1 1 8.500 2.500" fill="none" stroke="#8c9aa8" strokeWidth="2.200" /><path d="M6.200 5h5V0z" fill="#8c9aa8" /></svg></Reload>
            </UrlBar>
            <SearchBox>
              <svg width="14" height="14"><circle cx="5.500" cy="5.500" r="4" fill="none" stroke="#999" strokeWidth="1.600" /><path d="m8.500 8.500 5 5" stroke="#999" strokeWidth="2.200" /></svg>
              <span>shinshan</span>
              <svg width="11" height="12"><path d="M0 6h9M5 1.500 9.500 6 5 10.500" fill="none" stroke="#8c9aa8" strokeWidth="2" /></svg>
            </SearchBox>
            <Cell $w={30}><Drawing x={780} y={201} w={54} h={54}><path d="m807 209 6 14 15 2-11 11 3 15-13-7-13 7 3-15-11-11 15-2z" fill="none" stroke="#4c4c4c" strokeWidth="5" strokeLinejoin="round" /></Drawing></Cell>
            <Rule $h={18} />
            <Cell $w={30}><Drawing x={876} y={203} w={48} h={48}><path d="M886 219v-5h8q1-7 6-7t6 7h8v5z" fill="#4c4c4c" /><rect x="882" y="217" width="37" height="29" rx="3" fill="#fff" stroke="#4c4c4c" strokeWidth="5" /><path d="M887 225h4M887 232h4M887 240h4M894 225h20M894 232h20M894 240h20" stroke="#4c4c4c" strokeWidth="3" /></Drawing></Cell>
            <Cell $w={46}><Drawing x={89} y={203} w={51} h={51}><path d="M90 208h48v16q-2 24-24 25-22-1-24-25z" fill="#5b5b5b" /><path d="m101 221 13 12 13-12" fill="none" stroke="#fff" strokeWidth="5" strokeLinecap="round" /></Drawing></Cell>
            <Cell $w={30}><Drawing x={204} y={203} w={48} h={51}><path d="M219 209h18v19h12l-21 21-21-21h12z" fill="#5b5b5b" /></Drawing></Cell>
            <Cell $w={46}><Drawing x={318} y={203} w={48} h={51}><path d="m320 230 22-21 7 6v-4h7v11l9 8-3 3-20-18-19 18z" fill="#5b5b5b" /><path d="m328 232 14-13 14 13v17h-9v-13h-9v13h-10z" fill="#5b5b5b" /></Drawing></Cell>
            <Cell $w={30}><Drawing x={431} y={203} w={51} h={51}><path d="M456 207c16 0 25 10 25 21s-9 21-25 21l-8-2-15 2 5-8q-6-6-6-13c0-12 9-21 24-21z" fill="#5b5b5b" /><circle cx="447" cy="222" r="4" fill="#fff" /><circle cx="465" cy="222" r="4" fill="#fff" /><path d="M442 230h28q-3 11-14 11t-14-11z" fill="#fff" /></Drawing></Cell>
            <Cell $w={56}><Drawing x={534} y={202} w={102} h={54}>
              <path d="m541 215 12 10M540 238l14-5M580 214l4-5M578 230l6 4M560 242l-3 6M550 212l8 8" stroke="#6b5a34" strokeWidth="2" /><path d="M549 226q12-18 34-14 1 16-14 24-12 5-20 3z" fill="#e8881a" /><path d="M556 222q12-8 22-8-8 8-20 12z" fill="#ffdf6e" /><path d="m562 216 7 18M552 226l4 10" stroke="#963b0b" strokeWidth="3" /><circle cx="549" cy="232" r="5" fill="#7d3412" />
              <path d="M599 202v53" stroke="#ccc" strokeWidth="3" /><path d="M610 226h18l-9 13z" fill="#8b8b8b" stroke="#5c5c5c" strokeWidth="3" />
            </Drawing></Cell>
            <Cell $w={26}><Drawing x={685} y={200} w={42} h={54}><path d="M687 212l15-8v6h24v4h-24v6z" fill="#14a83a" /><path d="M725 243l-15-8v6h-23v4h23v6z" fill="#ff1526" /></Drawing></Cell>
            <Cell $w={8} /><Rule $h={32} />
            <Cell $w={42}><svg width="16" height="14"><path d="M1 2h14M1 7h14M1 12h14" stroke="#4c4c4c" strokeWidth="2.300" strokeLinecap="round" /></svg></Cell>
          </NavBar>
          <Viewport>
            <Page>
              <Banner>
                <Drawing x={264} y={291} w={432} h={144}>
                  <path d="M352 307q-18-12-42-8-34 6-37 36 0 12 9 22-2 12-8 21 16 0 29-9h12" fill="none" stroke="#fff" strokeWidth="7" strokeLinejoin="round" />
                  <path d="M378 310c38 0 61 22 61 51s-23 51-61 51q-12 0-23-3-15 11-37 14 12-15 13-28-14-14-14-34c0-29 23-51 61-51z" fill="#3f5fa8" stroke="#fff" strokeWidth="9" strokeLinejoin="round" />
                  <text x="457" y="395" fontFamily="Roboto, sans-serif" fontWeight="500" fontSize="99" textLength="206" lengthAdjust="spacingAndGlyphs" fill="#fff">PUSH</text>
                  <circle cx="677" cy="335" r="12" fill="#74c645" /><path d="M666 354h23v43h-23z" fill="#74c645" />
                </Drawing>
                <Actions>
                  <CreateButton><svg width="12" height="12"><path d="M4.500 0h3v4.500H12v3H7.500V12h-3V7.500H0v-3h4.500z" fill="#fff" /></svg>Create New Project</CreateButton>
                  <UserMenu><svg width="28" height="14"><path d="M4.300 6.700C2.500 4.500 3 1 6.500 1s4 3.500 2.200 5.700q-.1.900 1.100 1.300 2.700.8 2.700 3V13H.5v-2Q.5 8.800 3.200 8q1.200-.4 1.100-1.300zM19 5h8l-4 4.500z" fill="#fff" /></svg></UserMenu>
                </Actions>
              </Banner>
              <Body>
                <Heading>Edit Profile</Heading>
                <Panel>
                  <div>
                    {fields.map(([l, v]) => <Field key={l}>{l}<Input readOnly value={v} /></Field>)}
                  </div>
                  <div>
                    <Field>Address<Input readOnly value="Chandigarh, India" /></Field>
                    <Coordinates><span>Lat: 30.7333148</span><span>Long: 76.7794179</span></Coordinates>
                    <MapFrame>
                      <Terrain />
                      <MapControls><MapType $on>Map</MapType><MapType>Satellite</MapType></MapControls>
                      <MapSearch readOnly value="Chandigarh, India" />
                    </MapFrame>
                  </div>
                </Panel>
              </Body>
            </Page>
            <Scrollbar>
              <ScrollEnd $h={14}><svg width="6" height="4"><path d="m0 4 3-3 3 3z" fill="#555" /></svg></ScrollEnd>
              <Gap $h={9} />
              <Thumb><svg width="6" height="8"><path d="M0 1h6M0 4h6M0 7h6" stroke="#aaa" /></svg></Thumb>
              <Gap />
              <ScrollEnd $h={14} $bottom><svg width="6" height="4"><path d="m0 0 3 3 3-3z" fill="#555" /></svg></ScrollEnd>
            </Scrollbar>
          </Viewport>
        </Browser>
      </Work>
    </Desktop>
  );
}
